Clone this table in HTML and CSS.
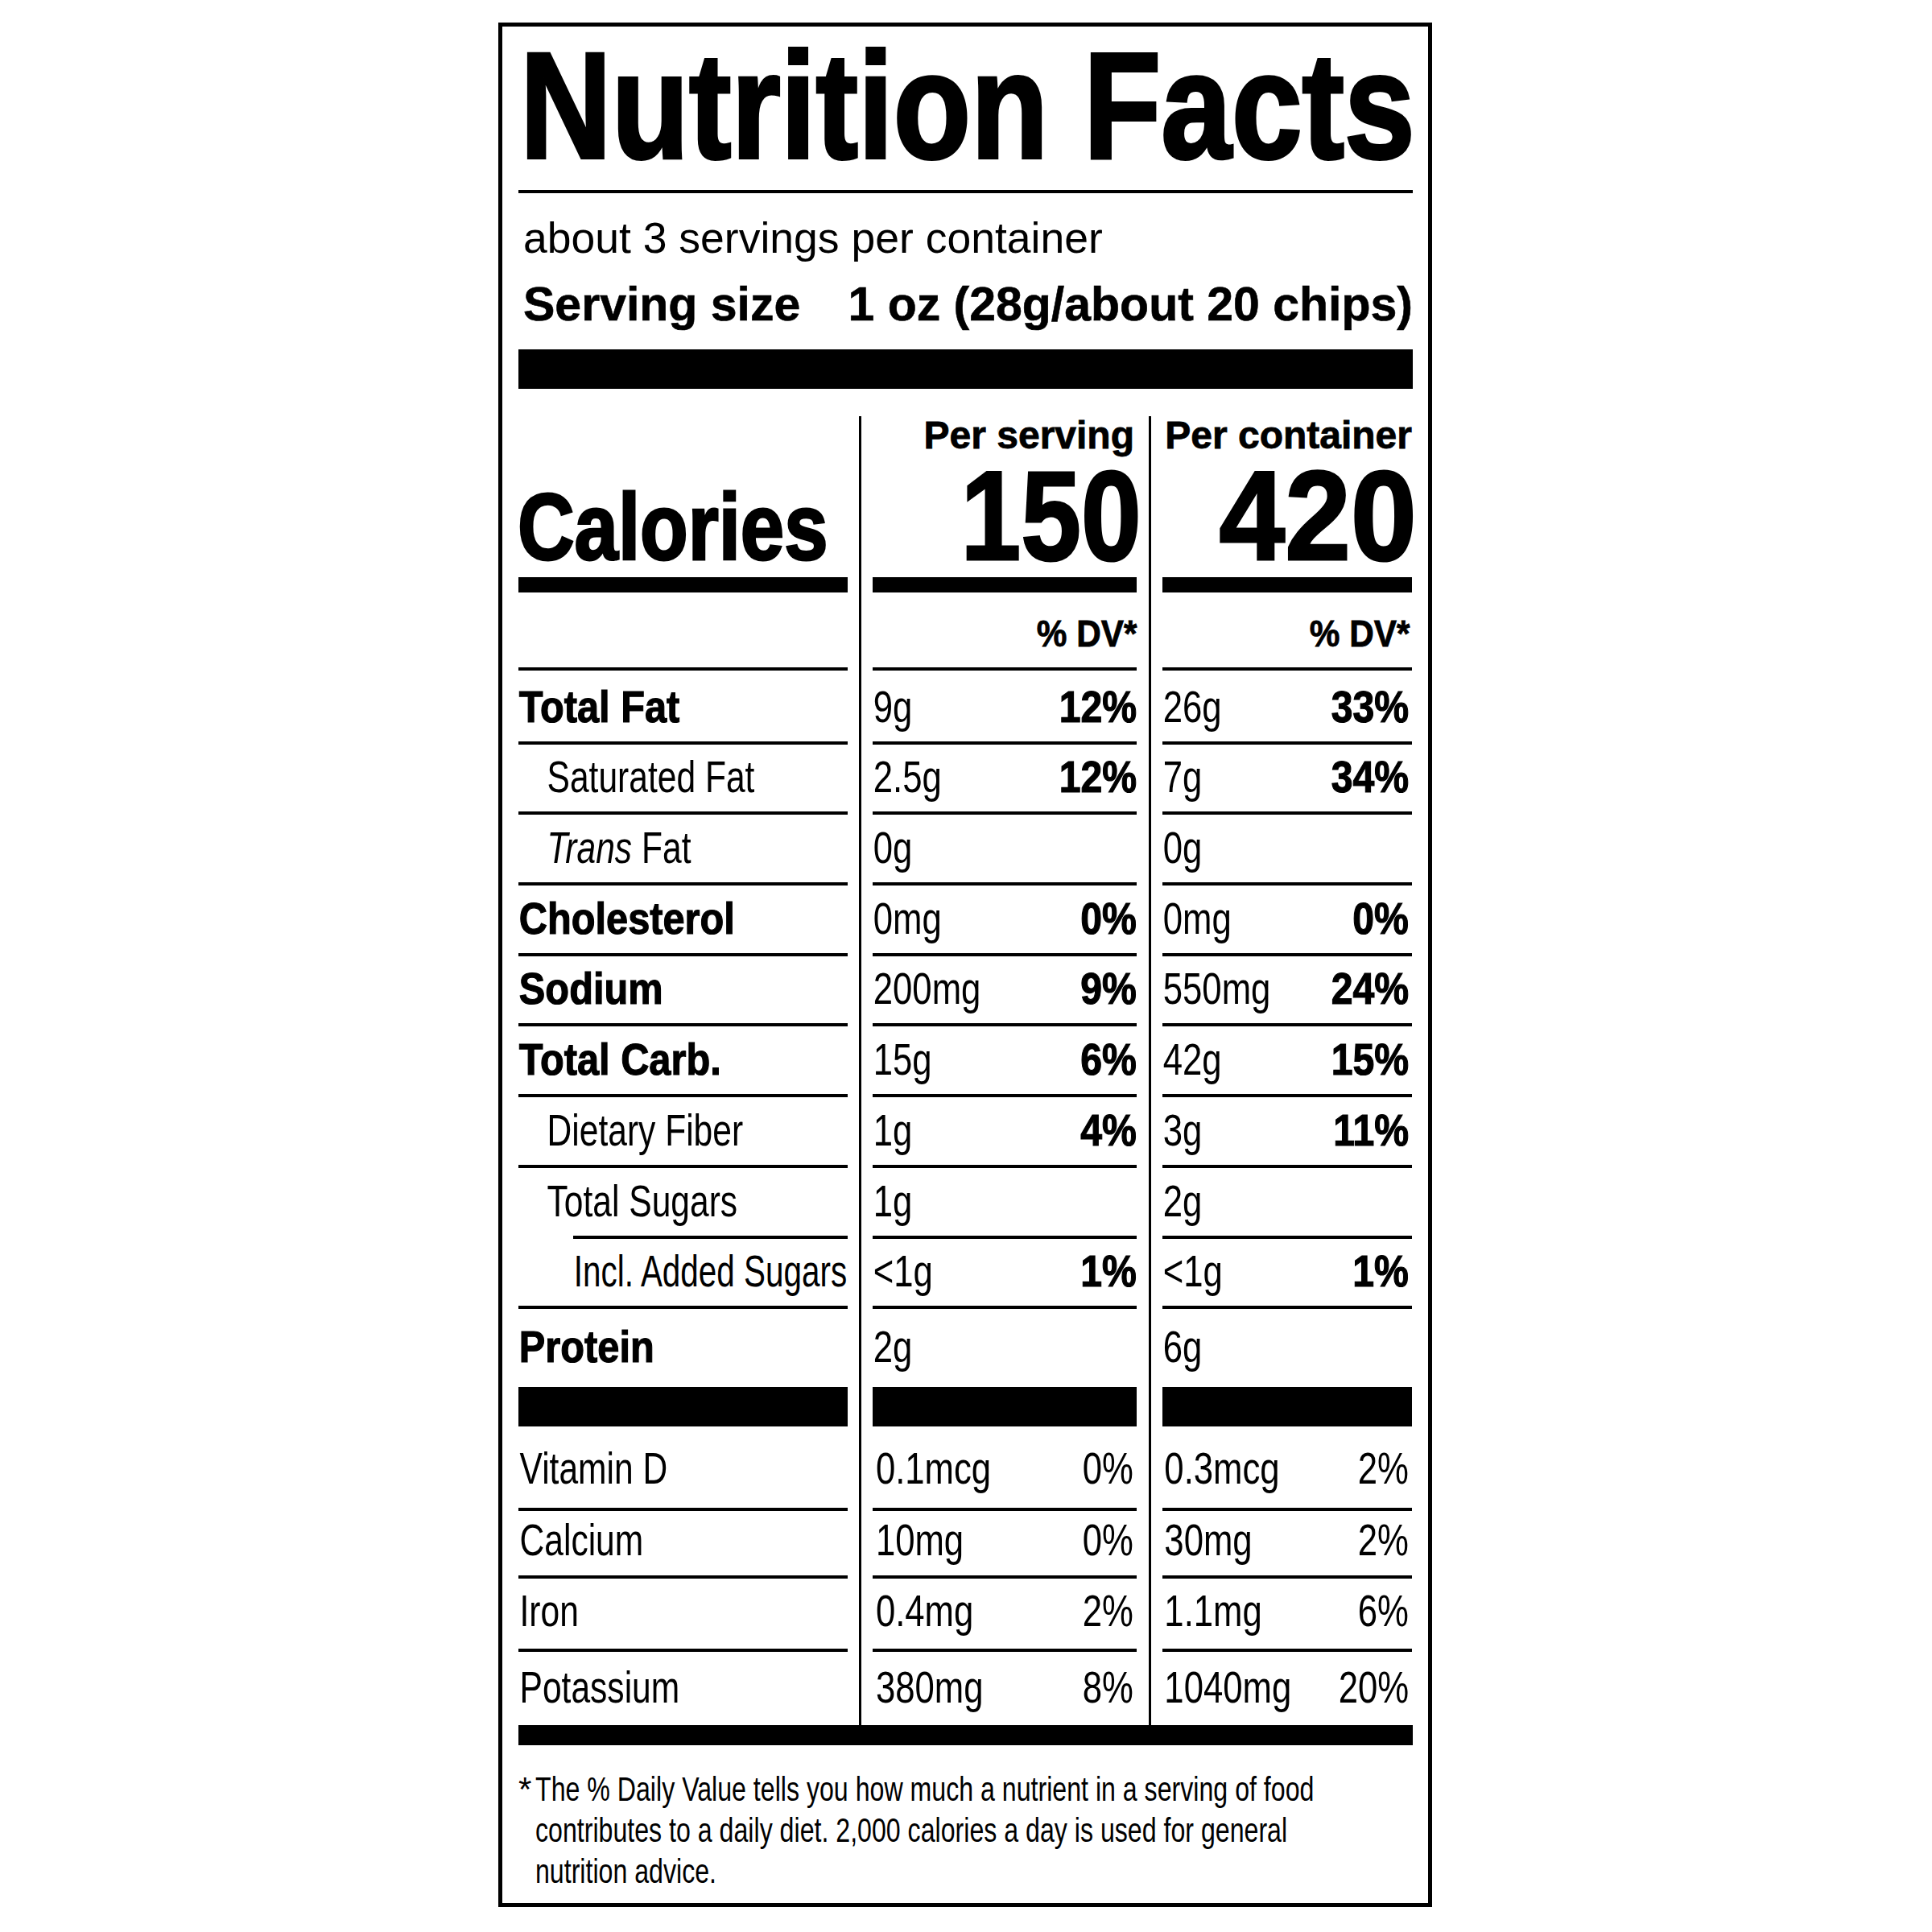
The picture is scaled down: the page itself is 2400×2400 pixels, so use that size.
FILE: index.html
```html
<!DOCTYPE html>
<html lang="en">
<head>
<meta charset="utf-8">
<title>Nutrition Facts</title>
<link rel="stylesheet" href="styles.css">
</head>
<body>
<div class="label">
  <h1 class="title"><span>Nutrition Facts</span></h1>
  <div class="rule"></div>
  <p class="servings">about 3 servings per container</p>
  <div class="size"><span>Serving size</span><span>1 oz (28g/about 20 chips)</span></div>
  <div class="bar-thick"></div>

  <div class="cols">
    <div class="col c1">
      <div class="head"><span class="cal">Calories</span></div>
      <div class="calbar"></div>
      <div class="dv"></div>
      <div class="row h88"><span class="lb">Total Fat</span></div>
      <div class="row h83 ind1"><span class="lr">Saturated Fat</span></div>
      <div class="row h84 ind1"><span class="lr"><i>Trans</i> Fat</span></div>
      <div class="row h84"><span class="lb">Cholesterol</span></div>
      <div class="row h83"><span class="lb">Sodium</span></div>
      <div class="row h84"><span class="lb">Total Carb.</span></div>
      <div class="row h84 ind1"><span class="lr">Dietary Fiber</span></div>
      <div class="row h84 ind1"><span class="lr">Total Sugars</span></div>
      <div class="row h83 ind2"><span class="lr">Incl. Added Sugars</span></div>
      <div class="row pro"><span class="lb">Protein</span></div>
      <div class="tbar"></div>
      <div class="row vd"><span class="lr">Vitamin D</span></div>
      <div class="row ca"><span class="lr">Calcium</span></div>
      <div class="row fe"><span class="lr">Iron</span></div>
      <div class="row k"><span class="lr">Potassium</span></div>
    </div>

    <div class="col c2">
      <div class="head"><span class="per">Per serving</span><span class="big">150</span></div>
      <div class="calbar"></div>
      <div class="dv"><span>% DV*</span></div>
      <div class="row h88"><span class="v">9g</span><span class="pb">12%</span></div>
      <div class="row h83"><span class="v">2.5g</span><span class="pb">12%</span></div>
      <div class="row h84"><span class="v">0g</span></div>
      <div class="row h84"><span class="v">0mg</span><span class="pb">0%</span></div>
      <div class="row h83"><span class="v">200mg</span><span class="pb">9%</span></div>
      <div class="row h84"><span class="v">15g</span><span class="pb">6%</span></div>
      <div class="row h84"><span class="v">1g</span><span class="pb">4%</span></div>
      <div class="row h84"><span class="v">1g</span></div>
      <div class="row h83"><span class="v">&lt;1g</span><span class="pb">1%</span></div>
      <div class="row pro"><span class="v">2g</span></div>
      <div class="tbar"></div>
      <div class="row vd vit"><span class="v">0.1mcg</span><span class="pr">0%</span></div>
      <div class="row ca vit"><span class="v">10mg</span><span class="pr">0%</span></div>
      <div class="row fe vit"><span class="v">0.4mg</span><span class="pr">2%</span></div>
      <div class="row k vit"><span class="v">380mg</span><span class="pr">8%</span></div>
    </div>

    <div class="col c3">
      <div class="head"><span class="per">Per container</span><span class="big">420</span></div>
      <div class="calbar"></div>
      <div class="dv"><span>% DV*</span></div>
      <div class="row h88"><span class="v">26g</span><span class="pb">33%</span></div>
      <div class="row h83"><span class="v">7g</span><span class="pb">34%</span></div>
      <div class="row h84"><span class="v">0g</span></div>
      <div class="row h84"><span class="v">0mg</span><span class="pb">0%</span></div>
      <div class="row h83"><span class="v">550mg</span><span class="pb">24%</span></div>
      <div class="row h84"><span class="v">42g</span><span class="pb">15%</span></div>
      <div class="row h84"><span class="v">3g</span><span class="pb">11%</span></div>
      <div class="row h84"><span class="v">2g</span></div>
      <div class="row h83"><span class="v">&lt;1g</span><span class="pb">1%</span></div>
      <div class="row pro"><span class="v">6g</span></div>
      <div class="tbar"></div>
      <div class="row vd vit"><span class="v">0.3mcg</span><span class="pr">2%</span></div>
      <div class="row ca vit"><span class="v">30mg</span><span class="pr">2%</span></div>
      <div class="row fe vit"><span class="v">1.1mg</span><span class="pr">6%</span></div>
      <div class="row k vit"><span class="v">1040mg</span><span class="pr">20%</span></div>
    </div>
  </div>

  <div class="bar-bottom"></div>
  <div class="foot">
    <span class="star">*</span>
    <span class="txt">The % Daily Value tells you how much a nutrient in a serving of food<br>contributes to a daily diet. 2,000 calories a day is used for general<br>nutrition advice.</span>
  </div>
</div>
</body>
</html>
```

FILE: styles.css
```css
* {
  box-sizing: border-box;
  margin: 0;
  padding: 0;
}

body {
  background: #fff;
  color: #000;
  font-family: "Liberation Sans", Arial, sans-serif;
}

.label {
  width: 1160px;
  margin: 28px 0 0 619px;
  border: 5px solid #000;
  padding: 0 19px 14px 20px;
}

.title {
  font-size: 188px;
  line-height: 188px;
  font-weight: 700;
  margin: 4px 0 0 2px;
  white-space: nowrap;
}

.title span {
  display: inline-block;
  transform: scaleX(0.838);
  transform-origin: left;
  -webkit-text-stroke: 4px #000;
}

.rule {
  height: 4px;
  background: #000;
  margin-top: 11px;
}

.servings {
  font-size: 53.5px;
  line-height: 54px;
  margin-top: 29px;
  padding-left: 6px;
  white-space: nowrap;
}

.size {
  display: flex;
  justify-content: space-between;
  font-size: 59px;
  line-height: 59px;
  font-weight: 700;
  margin-top: 26px;
  padding-left: 6px;
  white-space: nowrap;
  -webkit-text-stroke: 0.6px #000;
}

.bar-thick {
  height: 49px;
  background: #000;
  margin-top: 26px;
}

.cols {
  display: flex;
  margin-top: 34px;
}

.col {
  display: flex;
  flex-direction: column;
}

.c1 {
  width: 409px;
}

.c2 {
  width: 345px;
  margin-left: 14px;
  border-left: 3px solid #000;
  padding-left: 14px;
}

.c3 {
  width: 327px;
  margin-left: 15px;
  border-left: 3px solid #000;
  padding-left: 14px;
}

.head {
  height: 200px;
  display: flex;
  flex-direction: column;
  align-items: flex-end;
  justify-content: flex-end;
  white-space: nowrap;
}

.c1 .head {
  align-items: flex-start;
}

.cal {
  font-size: 117px;
  line-height: 125px;
  font-weight: 700;
  transform: scaleX(0.835);
  transform-origin: left;
  margin-left: -1px;
  -webkit-text-stroke: 3px #000;
}

.per {
  font-size: 48px;
  line-height: 47px;
  font-weight: 700;
  -webkit-text-stroke: 0.8px #000;
}

.c2 .per {
  margin-right: 3px;
}

.big {
  font-size: 158px;
  line-height: 153px;
  font-weight: 700;
  transform-origin: right;
  margin-right: -6px;
  -webkit-text-stroke: 3px #000;
}

.c2 .big {
  transform: scaleX(0.85);
}

.c3 .big {
  transform: scaleX(0.93);
}

.calbar {
  height: 19px;
  background: #000;
}

.dv {
  height: 93px;
  padding-top: 9px;
  line-height: 84px;
  font-size: 46px;
  font-weight: 700;
  display: flex;
  justify-content: flex-end;
  white-space: nowrap;
}

.dv span {
  transform: scaleX(0.92);
  transform-origin: right;
  -webkit-text-stroke: 0.8px #000;
}

.c3 .dv span {
  margin-right: 3px;
}

.row {
  box-sizing: content-box;
  border-top: 4px solid #000;
  display: flex;
  align-items: flex-end;
  justify-content: space-between;
  font-size: 56px;
  line-height: 87px;
  white-space: nowrap;
}

.h88 { height: 88px; }
.h83 { height: 83px; }
.h84 { height: 84px; }

.pro {
  height: 90px;
  padding-bottom: 7px;
}

.tbar {
  height: 49px;
  background: #000;
}

.vd {
  border-top: none;
  height: 95px;
  padding-bottom: 6px;
}

.ca {
  height: 79px;
  padding-bottom: 1px;
}

.fe {
  height: 83px;
  padding-bottom: 4px;
}

.k {
  height: 87px;
  padding-bottom: 4px;
}

.ind1 {
  padding-left: 34px;
}

.ind2 {
  margin-left: 68px;
}

.lb {
  font-weight: 700;
  transform: scaleX(0.87);
  transform-origin: left;
  padding-left: 1px;
  -webkit-text-stroke: 1.2px #000;
}

.lr {
  transform: scaleX(0.76);
  transform-origin: left;
  padding-left: 2px;
}

.ind2 .lr {
  transform: scaleX(0.722);
  padding-left: 1px;
}

.v {
  flex: 1 1 0;
  min-width: 0;
  transform: scaleX(0.78);
  transform-origin: left;
  padding-left: 1px;
}

.c2 .vit .v {
  padding-left: 5px;
}

.c3 .vit .v {
  padding-left: 3px;
}

.pb {
  flex: none;
  font-weight: 700;
  transform: scaleX(0.86);
  transform-origin: right;
  -webkit-text-stroke: 1.2px #000;
}

.c3 .pb {
  margin-right: 4px;
}

.pr {
  flex: none;
  transform: scaleX(0.78);
  transform-origin: right;
  margin-right: 4px;
}

.bar-bottom {
  height: 25px;
  background: #000;
}

.foot {
  display: flex;
  margin-top: 29px;
  font-size: 42px;
  line-height: 51px;
  white-space: nowrap;
}

.foot .star {
  flex: none;
  width: 21px;
}

.foot .txt {
  transform: scaleX(0.765);
  transform-origin: left;
}
```
